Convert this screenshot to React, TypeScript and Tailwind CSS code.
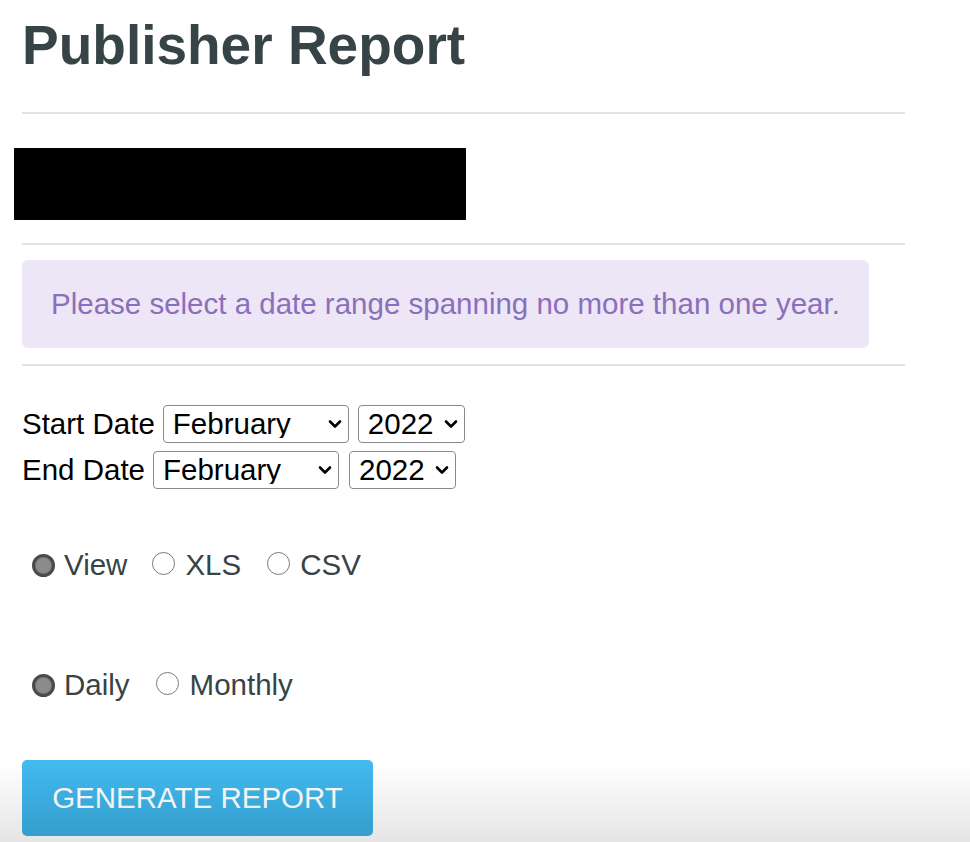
import React from "react";

const Chevron = () => (
  <svg width="14" height="9" viewBox="0 0 14 9" className="pointer-events-none absolute right-[7px] top-1/2 -translate-y-1/2">
    <path d="M2 2 L7 7 L12 2" fill="none" stroke="#000" strokeWidth="2.6" strokeLinecap="round" strokeLinejoin="round" />
  </svg>
);

const Select = ({ value, options, w }: { value: string; options: string[]; w: string }) => (
  <div className={`relative inline-block ${w}`}>
    <select
      defaultValue={value}
      className="h-[38px] w-full appearance-none rounded-[4px] border-[1.5px] border-[#8a8a8a] bg-white pl-[9px] pr-[22px] text-[29.5px] leading-none text-black outline-none"
      style={{ fontFamily: '"Liberation Sans", Arial, sans-serif' }}
    >
      {options.map((o) => (
        <option key={o}>{o}</option>
      ))}
    </select>
    <Chevron />
  </div>
);

const Radio = ({ checked }: { checked?: boolean }) =>
  checked ? (
    <span className="inline-block h-[23px] w-[23px] shrink-0 rounded-full border-[3px] border-[#4a4a4a] bg-[#8c8c8c] shadow-[inset_0_0_2px_rgba(0,0,0,0.4)]" />
  ) : (
    <span className="inline-block h-[23px] w-[23px] shrink-0 rounded-full border-[1.5px] border-[#7a7a7a] bg-white" />
  );

const months = ["January", "February", "March", "April", "May", "June", "July", "August", "September", "October", "November", "December"];
const years = ["2020", "2021", "2022"];

export default function App() {
  return (
    <div
      className="relative h-[842px] w-[970px] overflow-hidden bg-white"
      style={{ fontFamily: '"Liberation Sans", Arial, Helvetica, sans-serif' }}
    >
      <div className="w-[905px] pl-[22px]">
        <h1 className="pt-[14px] text-[55px] font-bold leading-[62px] text-[#374447]">Publisher Report</h1>
        <div className="mt-[36px] h-[2px] bg-[#e3e3e3]" />
        <div className="-ml-[8px] mt-[34px] h-[72px] w-[452px] bg-black" />
        <div className="mt-[23px] h-[2px] bg-[#e3e3e3]" />
        <div className="mt-[15px] flex h-[88px] w-[847px] items-center rounded-[6px] bg-[#ece6f6] pl-[29px] text-[29.5px] text-[#8a6fbb]">
          Please select a date range spanning no more than one year.
        </div>
        <div className="mt-[16px] h-[2px] bg-[#e3e3e3]" />

        <div className="mt-[39px] flex h-[38px] items-center text-[29.5px] text-black">
          <span className="mr-[8px]">Start Date</span>
          <Select value="February" options={months} w="w-[186px]" />
          <span className="w-[9px]" />
          <Select value="2022" options={years} w="w-[107px]" />
        </div>
        <div className="mt-[8px] flex h-[38px] items-center text-[29.5px] text-black">
          <span className="mr-[8px]">End Date</span>
          <Select value="February" options={months} w="w-[186px]" />
          <span className="w-[10px]" />
          <Select value="2022" options={years} w="w-[107px]" />
        </div>

        <div className="mt-[59px] flex h-[34px] items-center pl-[10px] text-[29.5px] text-[#374447]">
          <Radio checked />
          <span className="ml-[9px]">View</span>
          <span className="ml-[25px]"><Radio /></span>
          <span className="ml-[10px]">XLS</span>
          <span className="ml-[26px]"><Radio /></span>
          <span className="ml-[10px]">CSV</span>
        </div>

        <div className="mt-[86px] flex h-[34px] items-center pl-[10px] text-[29.5px] text-[#374447]">
          <Radio checked />
          <span className="ml-[9px]">Daily</span>
          <span className="ml-[26px]"><Radio /></span>
          <span className="ml-[11px]">Monthly</span>
        </div>

        <button className="mt-[58px] flex h-[76px] w-[351px] items-center justify-center rounded-[5px] bg-gradient-to-b from-[#42baf0] to-[#3aaee2] text-[29.5px] text-white">
          GENERATE REPORT
        </button>
      </div>
      <div className="pointer-events-none absolute bottom-0 left-0 h-[80px] w-full bg-gradient-to-b from-transparent to-[rgba(0,0,0,0.1)]" />
    </div>
  );
}
